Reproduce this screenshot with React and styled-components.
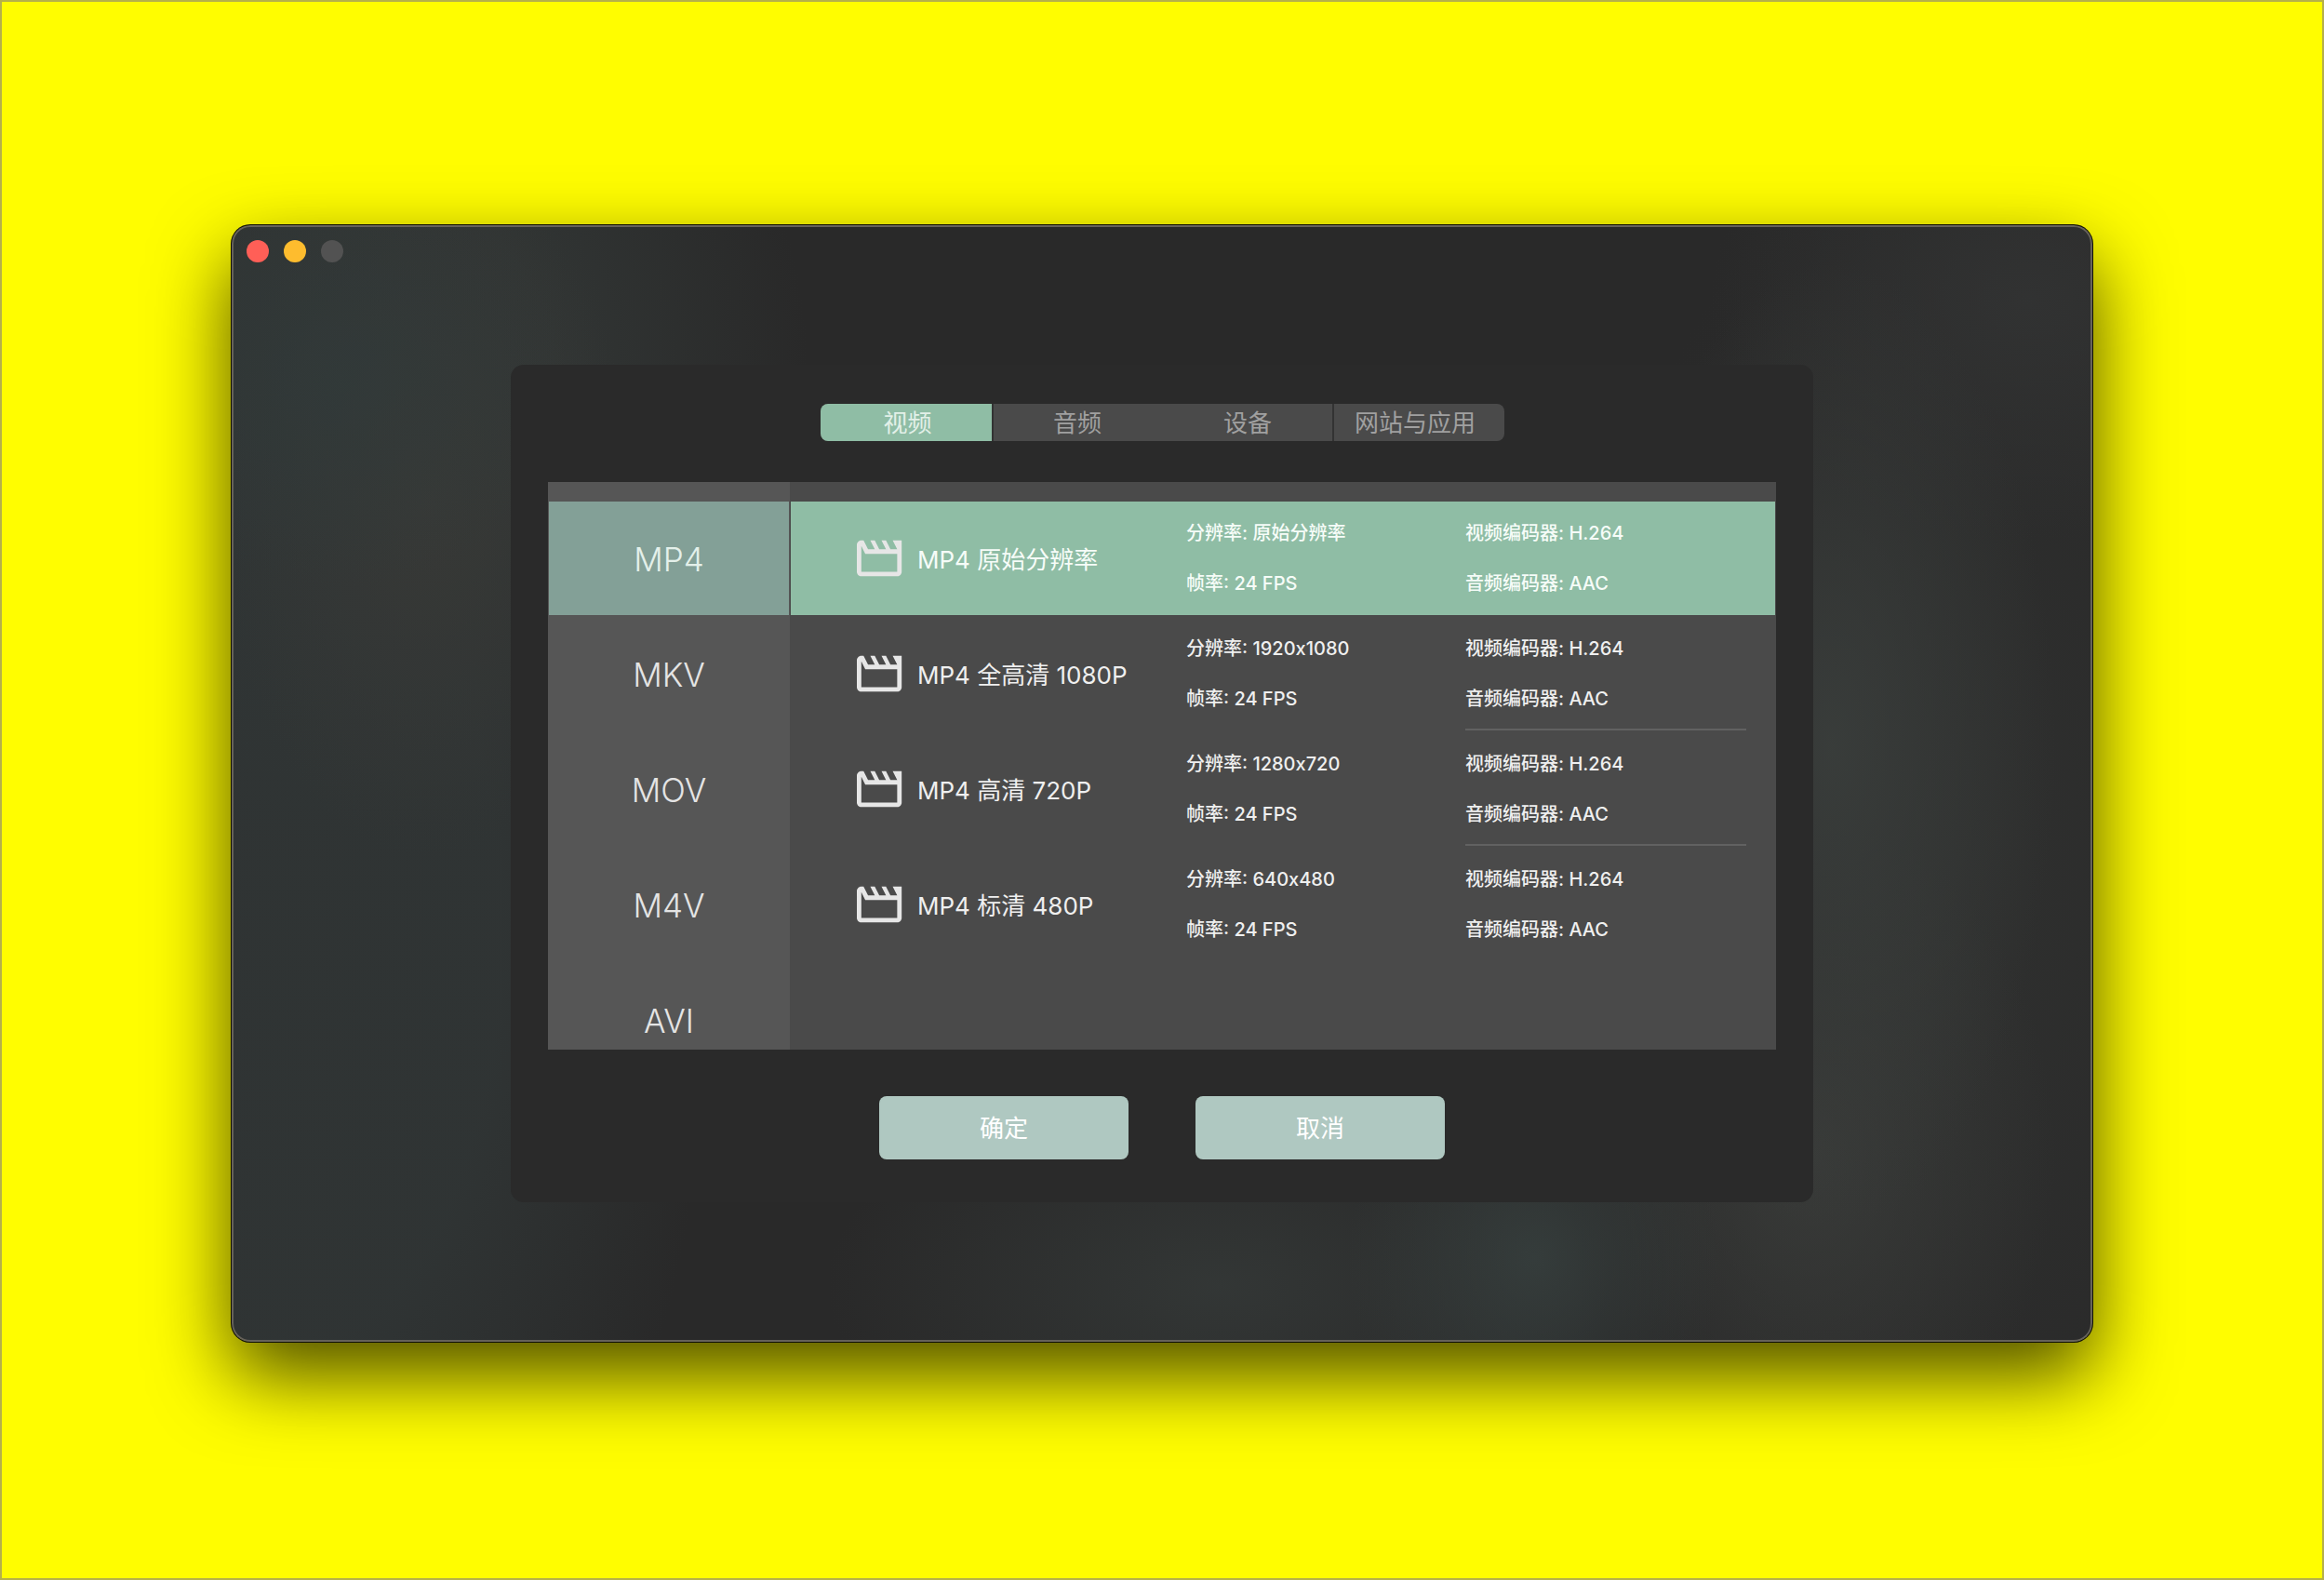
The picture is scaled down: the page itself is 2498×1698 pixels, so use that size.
import React, { useState } from "react";
import styled, { createGlobalStyle } from "styled-components";

const GlobalStyle = createGlobalStyle`
  *, *::before, *::after { box-sizing: border-box; }
  body { margin: 0; background: #fffd00; }
  button {
    margin: 0;
    padding: 0;
    border: 0;
    background: none;
    color: inherit;
    font: inherit;
    cursor: pointer;
  }
`;

const Desktop = styled.main`
  display: flex;
  min-height: 100vh;
  padding: 240px 247px 254px;
  border: 2px solid #b5b04a;
  background: #fffd00;
  color: #ebebeb;
  font-family: Inter, "Noto Sans CJK SC", sans-serif;
  font-size: 26px;
  line-height: 36px;
`;

const Window = styled.section`
  display: flex;
  flex: 1;
  flex-direction: column;
  padding-bottom: 150px;
  border-radius: 20px;
  background:
    radial-gradient(ellipse 240px 220px at 120px 170px, rgba(48, 59, 59, 0.6), transparent),
    radial-gradient(ellipse 220px 380px at 210px 300px, rgba(58, 58, 55, 0.7), transparent),
    radial-gradient(ellipse 460px 900px at 60px 760px, rgba(48, 53, 53, 0.9) 50%, transparent),
    radial-gradient(ellipse 460px 500px at 160px 160px, #313534 40%, transparent),
    radial-gradient(ellipse 200px 220px at 1400px 1110px, rgba(54, 62, 61, 0.9), transparent),
    radial-gradient(ellipse 420px 220px at 1060px 1140px, rgba(52, 56, 55, 0.9), transparent),
    radial-gradient(ellipse 240px 520px at 1720px 560px, rgba(58, 62, 60, 0.9), transparent),
    radial-gradient(ellipse 260px 360px at 1700px 1000px, rgba(58, 60, 58, 0.9), transparent),
    radial-gradient(ellipse 340px 260px at 1930px 80px, rgba(50, 51, 51, 0.9), transparent),
    radial-gradient(ellipse 400px 800px at 1840px 700px, rgba(48, 49, 48, 0.9), transparent),
    #292929;
  box-shadow:
    inset 0 0 0 2px #66625a,
    0 0 0 1px #111100,
    0 36px 84px rgba(0, 0, 0, 0.7);
`;

const TitleBar = styled.header`
  display: flex;
  gap: 16px;
  height: 150px;
  padding: 16px;
`;

const WindowControl = styled.button`
  width: 24px;
  height: 24px;
  border-radius: 50%;
  background: ${(p) => p.$color};
`;

const Dialog = styled.form`
  display: flex;
  flex-direction: column;
  align-items: center;
  width: 1400px;
  max-width: 100%;
  margin: 0 auto;
  padding: 42px 40px 46px;
  border-radius: 14px;
  background: #2a2a2a;
`;

const Tabs = styled.div`
  display: grid;
  grid-template-columns: 184px 183px 183px 185px;
  height: 40px;
  border-radius: 8px;
  background: #4a4a4a;
  overflow: hidden;
`;

const Tab = styled.button`
  padding-top: 2px;
  border-left: 2px solid ${(p) => (p.$divided ? "#333333" : "transparent")};
  background: ${(p) => (p.$active ? "#8fbda5" : "transparent")};
  background-clip: ${(p) => (p.$divided ? "padding-box" : "border-box")};
  color: ${(p) => (p.$active ? "#e2f0e8" : "#a0a0a0")};
  &:first-child { border-left: 0; padding-left: 4px; }
  &:last-child { padding-right: 8px; }
`;

const Picker = styled.div`
  display: grid;
  grid-template-columns: 260px 1fr;
  width: 100%;
  height: 610px;
  margin: 44px 0 50px;
  overflow: hidden;
`;

const List = styled.div`
  padding-top: 20px;
  background: ${(p) => p.$tone};
  overflow: hidden;
`;

const FormatItem = styled.button`
  display: block;
  width: 100%;
  height: 124px;
  padding-top: 2px;
  border: 1px solid transparent;
  background: ${(p) => (p.$active ? "#83a097" : "transparent")};
  background-clip: padding-box;
  color: ${(p) => (p.$active ? "#e4f0ea" : "#e4e4e4")};
  font-size: 35px;
  font-weight: 300;
`;

const PresetItem = styled.button`
  display: grid;
  grid-template-columns: 354px 300px 1fr;
  width: 100%;
  height: 124px;
  padding: 0 31px 0 71px;
  border: 1px solid transparent;
  background: ${(p) => (p.$active ? "#8fbda5" : "transparent")};
  background-clip: padding-box;
  color: ${(p) => (p.$active ? "#f6fcf8" : "#efefef")};
  text-align: left;
`;

const PresetName = styled.span`
  display: flex;
  align-items: center;
  gap: 12px;
`;

const PresetLabel = styled.span`
  padding-top: 4px;
`;

const PresetIcon = styled.svg`
  width: 53px;
  height: 58px;
  fill: #e6e6e6;
`;

const Details = styled.span`
  display: flex;
  flex-direction: column;
  gap: 26px;
  padding-top: 20px;
  border-bottom: 2px solid ${(p) => (p.$ruled ? "#616161" : "transparent")};
  font-size: 20px;
  font-weight: 500;
  line-height: 28px;
`;

const Actions = styled.div`
  display: flex;
  gap: 72px;
`;

const Action = styled.button`
  width: 268px;
  height: 68px;
  padding-top: 2px;
  border-radius: 8px;
  background: #afc8c1;
  color: #ffffff;
`;

const tabs = ["视频", "音频", "设备", "网站与应用"];
const formats = ["MP4", "MKV", "MOV", "M4V", "AVI"];
const presets = [
  { name: "MP4 原始分辨率", resolution: "原始分辨率" },
  { name: "MP4 全高清 1080P", resolution: "1920x1080" },
  { name: "MP4 高清 720P", resolution: "1280x720" },
  { name: "MP4 标清 480P", resolution: "640x480" },
];

function MovieIcon() {
  return (
    <PresetIcon viewBox="2 0 22 24" preserveAspectRatio="xMinYMid meet" aria-hidden="true">
      <path d="M4 6.47L5.76 10H20v8H4V6.47M22 4h-4l2 4h-3l-2-4h-2l2 4h-3l-2-4H8l2 4H7L5 4H4c-1.1 0-1.99.9-1.99 2L2 18c0 1.1.9 2 2 2h16c1.1 0 2-.9 2-2V4z" />
    </PresetIcon>
  );
}

export default function App() {
  const [tab, setTab] = useState(0);
  const [format, setFormat] = useState(0);
  const [preset, setPreset] = useState(0);

  return (
    <>
      <GlobalStyle />
      <Desktop>
        <Window>
          <TitleBar>
            <WindowControl type="button" aria-label="关闭" $color="#ff5f57" />
            <WindowControl type="button" aria-label="最小化" $color="#febc2e" />
            <WindowControl type="button" aria-label="缩放" $color="#525252" disabled />
          </TitleBar>
          <Dialog onSubmit={(e) => e.preventDefault()}>
            <Tabs role="tablist">
              {tabs.map((label, i) => (
                <Tab
                  key={label}
                  type="button"
                  role="tab"
                  aria-selected={i === tab}
                  $active={i === tab}
                  $divided={i === 1 || i === 3}
                  onClick={() => setTab(i)}
                >
                  {label}
                </Tab>
              ))}
            </Tabs>
            <Picker>
              <List $tone="#565656">
                {formats.map((label, i) => (
                  <FormatItem
                    key={label}
                    type="button"
                    aria-pressed={i === format}
                    $active={i === format}
                    onClick={() => setFormat(i)}
                  >
                    {label}
                  </FormatItem>
                ))}
              </List>
              <List $tone="#4a4a4a">
                {presets.map((item, i) => (
                  <PresetItem
                    key={item.name}
                    type="button"
                    aria-pressed={i === preset}
                    $active={i === preset}
                    onClick={() => setPreset(i)}
                  >
                    <PresetName>
                      <MovieIcon />
                      <PresetLabel>{item.name}</PresetLabel>
                    </PresetName>
                    <Details>
                      <span>分辨率: {item.resolution}</span>
                      <span>帧率: 24 FPS</span>
                    </Details>
                    <Details $ruled={i !== preset && i < presets.length - 1}>
                      <span>视频编码器: H.264</span>
                      <span>音频编码器: AAC</span>
                    </Details>
                  </PresetItem>
                ))}
              </List>
            </Picker>
            <Actions>
              <Action type="submit">确定</Action>
              <Action type="button">取消</Action>
            </Actions>
          </Dialog>
        </Window>
      </Desktop>
    </>
  );
}
